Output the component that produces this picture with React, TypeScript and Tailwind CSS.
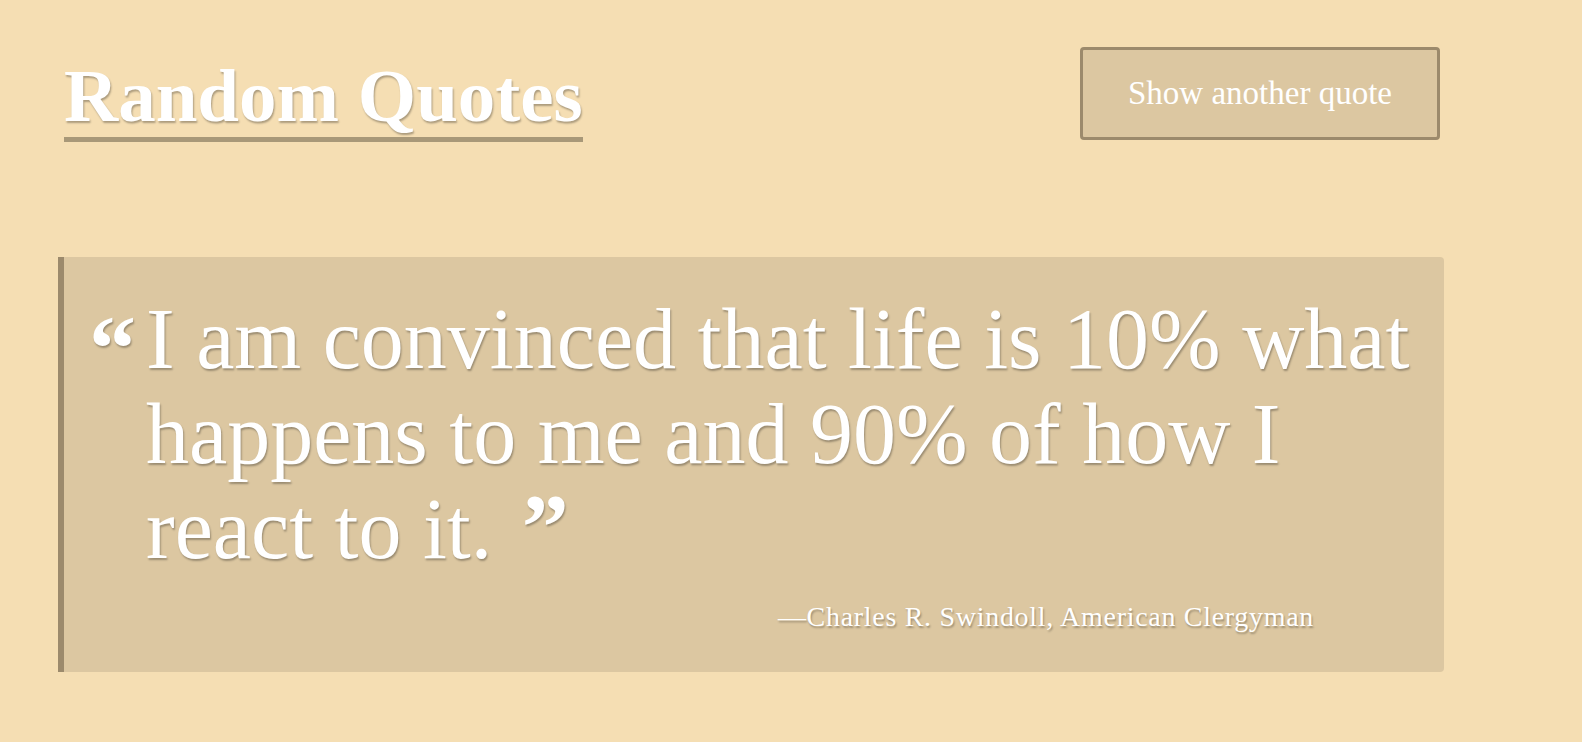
export default function App() {
  return (
    <div className="min-h-screen bg-[#f5deb3] font-['Liberation_Serif',serif] text-white [text-shadow:1px_2px_2px_rgba(0,0,0,0.3)]">
      <div className="ml-[58px] w-[1386px] pt-[47px]">
        {/* HEADER */}
        <header className="flex items-start justify-between">
          <h1 className="ml-[6px] mt-[11px] border-b-[5px] border-[#a89878] pb-[4px] text-[75px] font-bold leading-none">
            Random Quotes
          </h1>
          <button className="mr-[4px] h-[93px] w-[360px] rounded-[4px] border-[3px] border-[#9c8a6c] bg-[#dcc7a1] text-[33px] text-white">
            Show another quote
          </button>
        </header>

        {/* QUOTE CARD */}
        <blockquote className="mt-[115px] h-[415px] rounded-r-[4px] border-l-[6px] border-[#9c8a6c] bg-[#dcc7a1] pl-[25px] pt-[35px]">
          <div className="flex">
            <span className="mt-[9px] w-[57px] shrink-0 text-[94px] font-bold leading-none">“</span>
            <p className="w-[1272px] text-[86px] leading-[95px]">
              I am convinced that life is 10% what happens to me and 90% of how I react to it.{" "}
              <span className="ml-[8px] text-[94px] font-bold leading-[70px]">”</span>
            </p>
          </div>
          <p className="mt-[19px] pr-[130px] text-right text-[28px] tracking-wide">
            —Charles R. Swindoll, American Clergyman
          </p>
        </blockquote>
      </div>
    </div>
  );
}
